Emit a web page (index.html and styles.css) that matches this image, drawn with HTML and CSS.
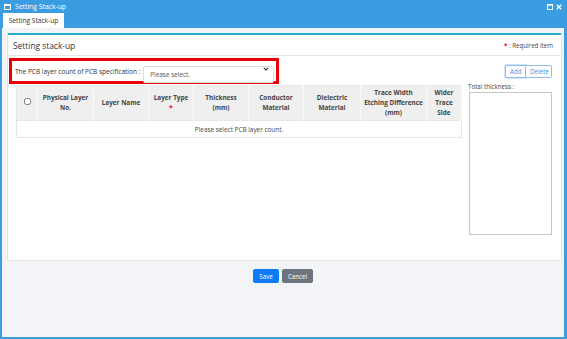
FILE: index.html
```html
<!DOCTYPE html>
<html lang="en">
<head>
  <meta charset="UTF-8">
  <title>Setting Stack-up</title>
  <link rel="stylesheet" href="styles.css">
</head>
<body>
  <div class="window">
    <div class="titlebar">
      <svg class="win-icon" width="7" height="6" viewBox="0 0 7 6"><rect x="0.5" y="0.5" width="6" height="5" fill="none" stroke="#fff"/><rect x="0.5" y="0.5" width="6" height="1.5" fill="#fff"/></svg>
      <span class="title">Setting Stack-up</span>
      <div class="win-btns">
        <svg width="6" height="6" viewBox="0 0 6 6"><rect x="0.5" y="0.5" width="5" height="5" fill="none" stroke="#fff"/><rect x="0.5" y="0.5" width="5" height="1.2" fill="#fff"/></svg>
        <svg width="6" height="6" viewBox="0 0 6 6"><path d="M0.8 0.8 L5.2 5.2 M5.2 0.8 L0.8 5.2" stroke="#fff" stroke-width="1.3"/></svg>
      </div>
    </div>
    <div class="tabs">
      <div class="tab">Setting Stack-up</div>
    </div>
    <div class="frame">
      <div class="card">
        <div class="card-head">
          <h1>Setting stack-up</h1>
          <div class="required"><span class="star">*</span> : Required item</div>
        </div>
        <div class="card-body">
          <div class="top-row">
            <div class="highlight">
              <label for="layers">The PCB layer count of PCB specification :</label>
              <div class="select-wrap">
                <select id="layers">
                  <option>Please select.</option>
                </select>
                <svg class="chevron" width="6" height="4" viewBox="0 0 6 4"><path d="M0.8 0.8 L3 3 L5.2 0.8" fill="none" stroke="#333" stroke-width="1.1"/></svg>
              </div>
            </div>
            <div class="btn-group">
              <button class="btn-outline active">Add</button>
              <button class="btn-outline">Delete</button>
            </div>
          </div>
          <div class="main-row">
            <table class="stack">
              <colgroup>
                <col style="width:21px"><col style="width:56px"><col style="width:55px"><col style="width:45px"><col style="width:55px"><col style="width:55px"><col style="width:57px"><col style="width:66px"><col style="width:35px">
              </colgroup>
              <thead>
                <tr>
                  <th><input type="checkbox" class="check"></th>
                  <th>Physical Layer<br>No.</th>
                  <th>Layer Name</th>
                  <th>Layer Type<br><span class="star">*</span></th>
                  <th>Thickness<br>(mm)</th>
                  <th>Conductor<br>Material</th>
                  <th>Dielectric<br>Material</th>
                  <th>Trace Width<br>Etching Difference<br>(mm)</th>
                  <th>Wider<br>Trace<br>Side</th>
                </tr>
              </thead>
              <tbody>
                <tr><td colspan="9" class="empty">Please select PCB layer count.</td></tr>
              </tbody>
            </table>
            <div class="side">
              <label for="total">Total thickness :</label>
              <textarea id="total"></textarea>
            </div>
          </div>
        </div>
      </div>
      <div class="footer">
        <button class="btn btn-save">Save</button>
        <button class="btn btn-cancel">Cancel</button>
      </div>
    </div>
  </div>
</body>
</html>
```
FILE: styles.css
```css
* { box-sizing: border-box; }
body {
  margin: 0;
  font-family: "Open Sans", "Noto Sans", sans-serif;
  color: #333;
}
.window {
  width: 567px;
  height: 339px;
  background: #3a9de2;
  display: flex;
  flex-direction: column;
}
.titlebar {
  height: 13px;
  display: flex;
  align-items: center;
  padding: 0 5px 0 4px;
  color: #fff;
  font-size: 6.8px;
}
.win-icon { margin-right: 4px; }
.title { flex: 1; }
.win-btns { display: flex; gap: 3px; }
.tabs { height: 15px; padding-left: 3px; display: flex; }
.tab {
  width: 61px;
  background: #fff;
  font-size: 6.6px;
  display: flex;
  align-items: center;
  justify-content: center;
  color: #333;
}
.frame {
  flex: 1;
  margin: 0 3px 2px 2px;
  background: #f3f4f8;
  padding: 5px 2px 0 5px;
  display: flex;
  flex-direction: column;
}
.card {
  height: 228px;
  background: #fff;
  border: 1px solid #e2e3e6;
  border-top: 2px solid #22b0c9;
  border-radius: 2px;
  display: flex;
  flex-direction: column;
}
.card-head {
  height: 21px;
  border-bottom: 1px solid #e6e6e6;
  display: flex;
  align-items: center;
  justify-content: space-between;
  padding: 1px 8px 0 5px;
}
h1 {
  margin: 0;
  font-size: 8.4px;
  font-weight: normal;
  color: #333;
}
.required { font-size: 6.2px; color: #444; }
.star { color: #e8101a; font-weight: bold; }
.card-body { padding: 2px 9px 0 1px; }
.top-row {
  display: flex;
  align-items: center;
  justify-content: space-between;
}
.highlight {
  width: 270px;
  height: 26px;
  border: 3px solid #e8000b;
  display: flex;
  align-items: center;
  padding: 0 2px 0 3px;
  gap: 3px;
}
.highlight label { font-size: 6.5px; color: #333; white-space: nowrap; }
.select-wrap { position: relative; flex: 1; }
select {
  width: 100%;
  height: 17px;
  appearance: none;
  border: 1px solid #dcdcdc;
  border-radius: 2px;
  background: #fff;
  font-family: inherit;
  font-size: 6.4px;
  color: #555;
  padding: 0 6px;
}
.chevron { position: absolute; right: 5px; top: 7px; }
.btn-group { display: flex; }
.btn-outline {
  height: 13px;
  padding: 0 4px;
  border: 1px solid #8cbcf0;
  background: #fff;
  color: #3d8ee8;
  font-family: inherit;
  font-size: 6.2px;
}
.btn-outline:first-child { border-radius: 2px 0 0 2px; width: 21px; }
.btn-outline:last-child { border-radius: 0 2px 2px 0; border-left: none; width: 26px; }
.btn-outline.active { box-shadow: 0 0 0 1px #cfe3fa; }
.main-row {
  display: flex;
  align-items: flex-start;
  gap: 6px;
  margin-top: 1px;
  padding-left: 7px;
}
.stack {
  width: 445px;
  table-layout: fixed;
  border-collapse: collapse;
  font-size: 6.4px;
  border: 1px solid #e6e6e6;
}
.stack th {
  background: #efefef;
  height: 35px;
  font-weight: bold;
  color: #444;
  line-height: 10px;
  text-align: center;
  border-right: 1px solid #fafafa;
  padding: 0 2px;
}
.stack th .star { font-size: 7px; }
.check { width: 7px; height: 7px; margin: 0; }
.stack td.empty {
  height: 17px;
  text-align: center;
  color: #444;
  border-top: 1px solid #e6e6e6;
}
.side {
  width: 84px;
  margin-top: -3px;
  display: flex;
  flex-direction: column;
  gap: 1px;
}
.side label { font-size: 6.2px; color: #444; }
textarea {
  width: 83px;
  height: 143px;
  border: 1px solid #c6c6c6;
  resize: none;
  margin-left: 1px;
}
.footer {
  display: flex;
  justify-content: center;
  gap: 3px;
  margin: 8px 0 0 -3px;
}
.btn {
  height: 14px;
  border: none;
  border-radius: 2px;
  color: #fff;
  font-family: inherit;
  font-size: 6.2px;
  padding: 0;
}
.btn-save { background: #0b7cf6; width: 26px; }
.btn-cancel { background: #6c757d; width: 31px; }
```
